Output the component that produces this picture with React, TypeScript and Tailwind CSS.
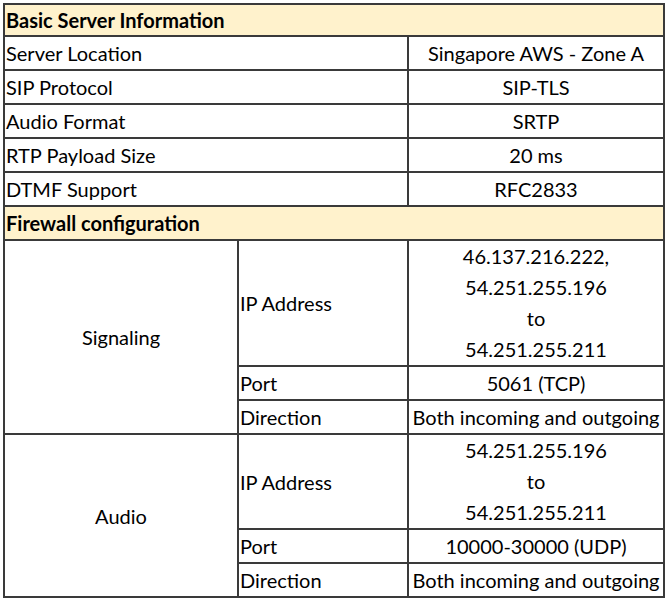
import React from 'react'

const cell = 'border-2 border-[#3a3a3a] px-px py-0 leading-[32px] align-middle'
const ipCell = 'border-2 border-[#3a3a3a] px-px py-0 leading-[31px] align-middle text-center'
const head = 'border-2 border-[#3a3a3a] bg-[#fff2cc] px-px py-0 font-bold text-left'

const basic: [string, string][] = [
  ['Server Location', 'Singapore AWS - Zone A'],
  ['SIP Protocol', 'SIP-TLS'],
  ['Audio Format', 'SRTP'],
  ['RTP Payload Size', '20 ms'],
  ['DTMF Support', 'RFC2833'],
]

interface Group {
  name: string
  ip: string[]
  port: string
}

const groups: Group[] = [
  {
    name: 'Signaling',
    ip: ['46.137.216.222,', '54.251.255.196', 'to', '54.251.255.211'],
    port: '5061 (TCP)',
  },
  {
    name: 'Audio',
    ip: ['54.251.255.196', 'to', '54.251.255.211'],
    port: '10000-30000 (UDP)',
  },
]

export default function App() {
  return (
    <div className="bg-white w-[667px] h-[600px] pt-[3px] pl-[3px] text-[20px] text-black" style={{ fontFamily: 'Lato, "Noto Sans", sans-serif' }}>
      <table className="border-collapse table-fixed w-[660px]">
        <colgroup>
          <col className="w-[234px]" />
          <col className="w-[170px]" />
          <col className="w-[256px]" />
        </colgroup>
        <tbody>
          <tr>
            <th colSpan={3} className={`${head} leading-[30px]`}>Basic Server Information</th>
          </tr>
          {basic.map(([k, v]) => (
            <tr key={k}>
              <td colSpan={2} className={cell}>{k}</td>
              <td className={`${cell} text-center`}>{v}</td>
            </tr>
          ))}
          <tr>
            <th colSpan={3} className={`${head} leading-[32px]`}>Firewall configuration</th>
          </tr>
          {groups.map((g) => (
            <React.Fragment key={g.name}>
              <tr>
                <td rowSpan={3} className={`${cell} text-center`}>{g.name}</td>
                <td className={cell}>IP Address</td>
                <td className={ipCell}>
                  {g.ip.map((l) => (
                    <div key={l}>{l}</div>
                  ))}
                </td>
              </tr>
              <tr>
                <td className={cell}>Port</td>
                <td className={`${cell} text-center`}>{g.port}</td>
              </tr>
              <tr>
                <td className={cell}>Direction</td>
                <td className={`${cell} text-center`}>Both incoming and outgoing</td>
              </tr>
            </React.Fragment>
          ))}
        </tbody>
      </table>
    </div>
  )
}
